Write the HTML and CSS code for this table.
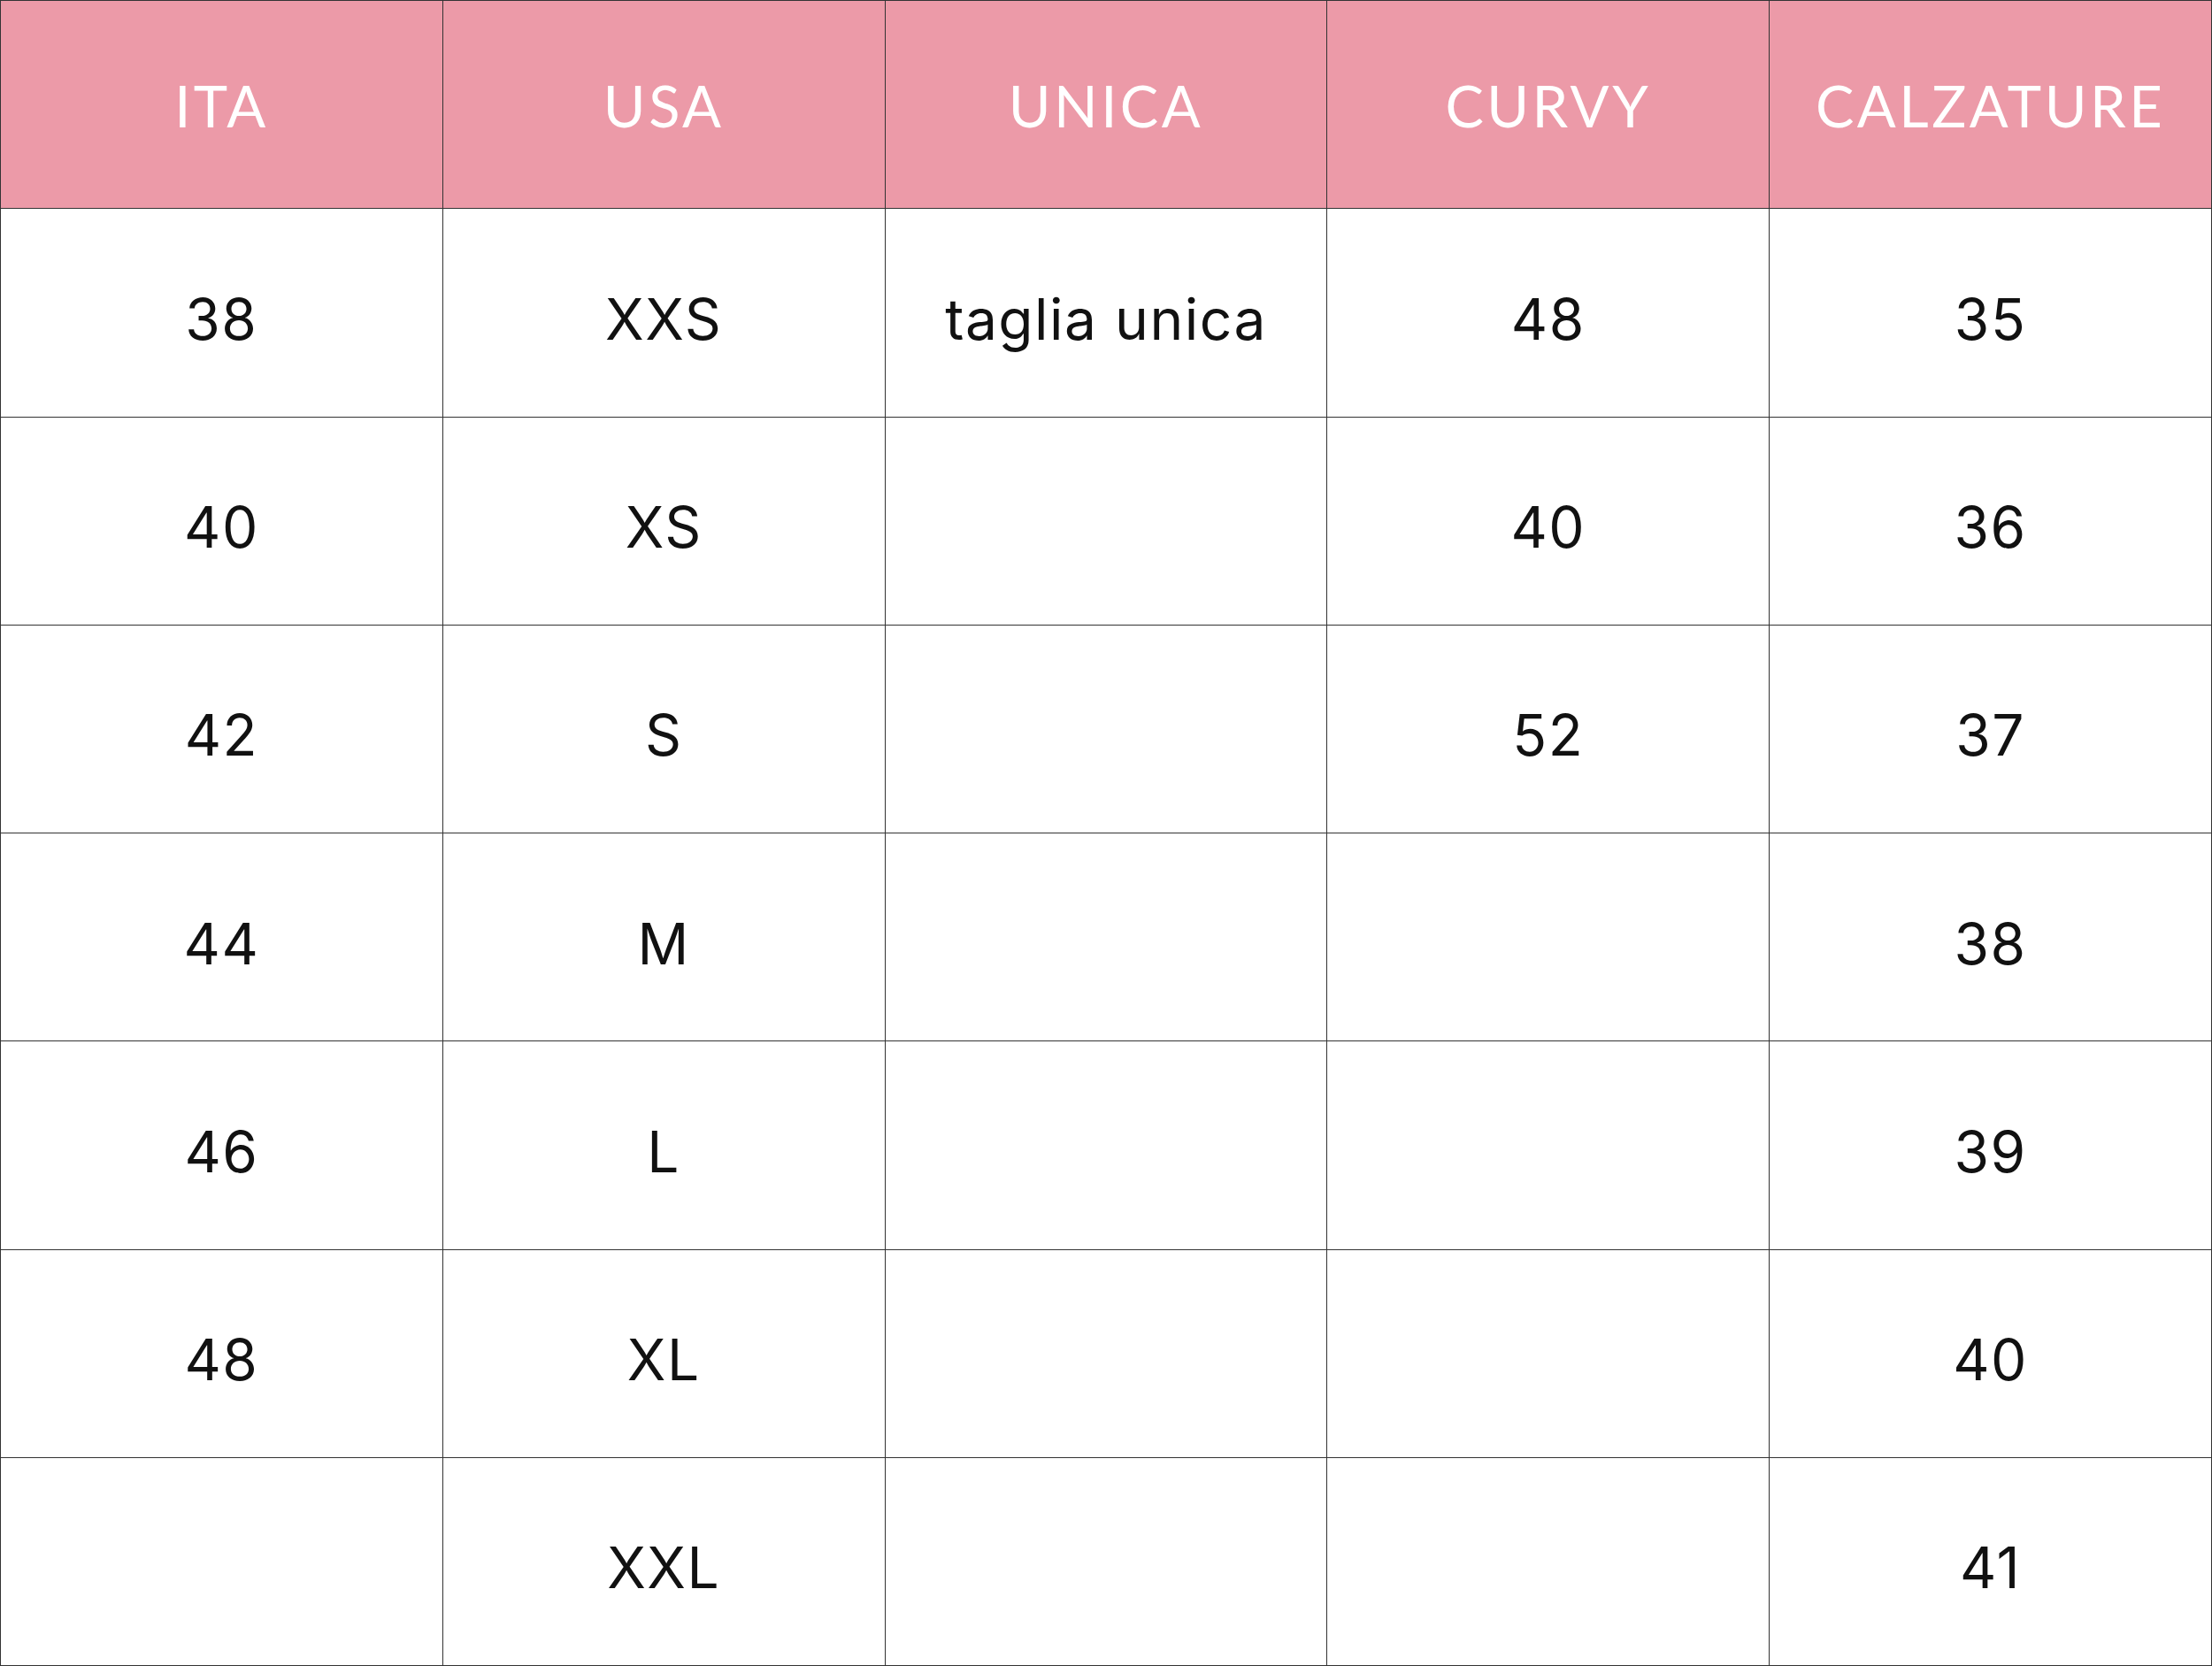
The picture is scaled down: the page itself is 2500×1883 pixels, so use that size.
FILE: index.html
```html
<!DOCTYPE html>
<html lang="it">
<head>
<meta charset="utf-8">
<title>Tabella taglie</title>
<link rel="stylesheet" href="styles.css">
</head>
<body>
<div class="sizes" role="table">
  <div class="cell head">ITA</div>
  <div class="cell head">USA</div>
  <div class="cell head">UNICA</div>
  <div class="cell head">CURVY</div>
  <div class="cell head">CALZATURE</div>

  <div class="cell">38</div><div class="cell">XXS</div><div class="cell">taglia unica</div><div class="cell">48</div><div class="cell">35</div>
  <div class="cell">40</div><div class="cell">XS</div><div class="cell"></div><div class="cell">40</div><div class="cell">36</div>
  <div class="cell">42</div><div class="cell">S</div><div class="cell"></div><div class="cell">52</div><div class="cell">37</div>
  <div class="cell">44</div><div class="cell">M</div><div class="cell"></div><div class="cell"></div><div class="cell">38</div>
  <div class="cell">46</div><div class="cell">L</div><div class="cell"></div><div class="cell"></div><div class="cell">39</div>
  <div class="cell">48</div><div class="cell">XL</div><div class="cell"></div><div class="cell"></div><div class="cell">40</div>
  <div class="cell"></div><div class="cell">XXL</div><div class="cell"></div><div class="cell"></div><div class="cell">41</div>
</div>
</body>
</html>
```

FILE: styles.css
```css
html, body {
  margin: 0;
  padding: 0;
  background: #ffffff;
}

.sizes {
  box-sizing: border-box;
  width: 2500px;
  height: 1883px;
  display: grid;
  grid-template-columns: repeat(5, 1fr);
  grid-template-rows: repeat(8, 1fr);
  border-top: 1.5px solid #333333;
  border-left: 1.5px solid #333333;
}

.cell {
  box-sizing: border-box;
  display: flex;
  align-items: center;
  justify-content: center;
  border-right: 1.5px solid #333333;
  border-bottom: 1.5px solid #333333;
  color: #111111;
  font-family: "Inter", "Open Sans", sans-serif;
  font-weight: 400;
  font-size: 64px;
  letter-spacing: 1.5px;
  padding-top: 14px;
}

.head {
  background: #ec9aa8;
  color: #ffffff;
  font-family: "Lato", "Open Sans", sans-serif;
  font-weight: 400;
  font-size: 65px;
  letter-spacing: 3.5px;
  padding-top: 1px;
}
```
